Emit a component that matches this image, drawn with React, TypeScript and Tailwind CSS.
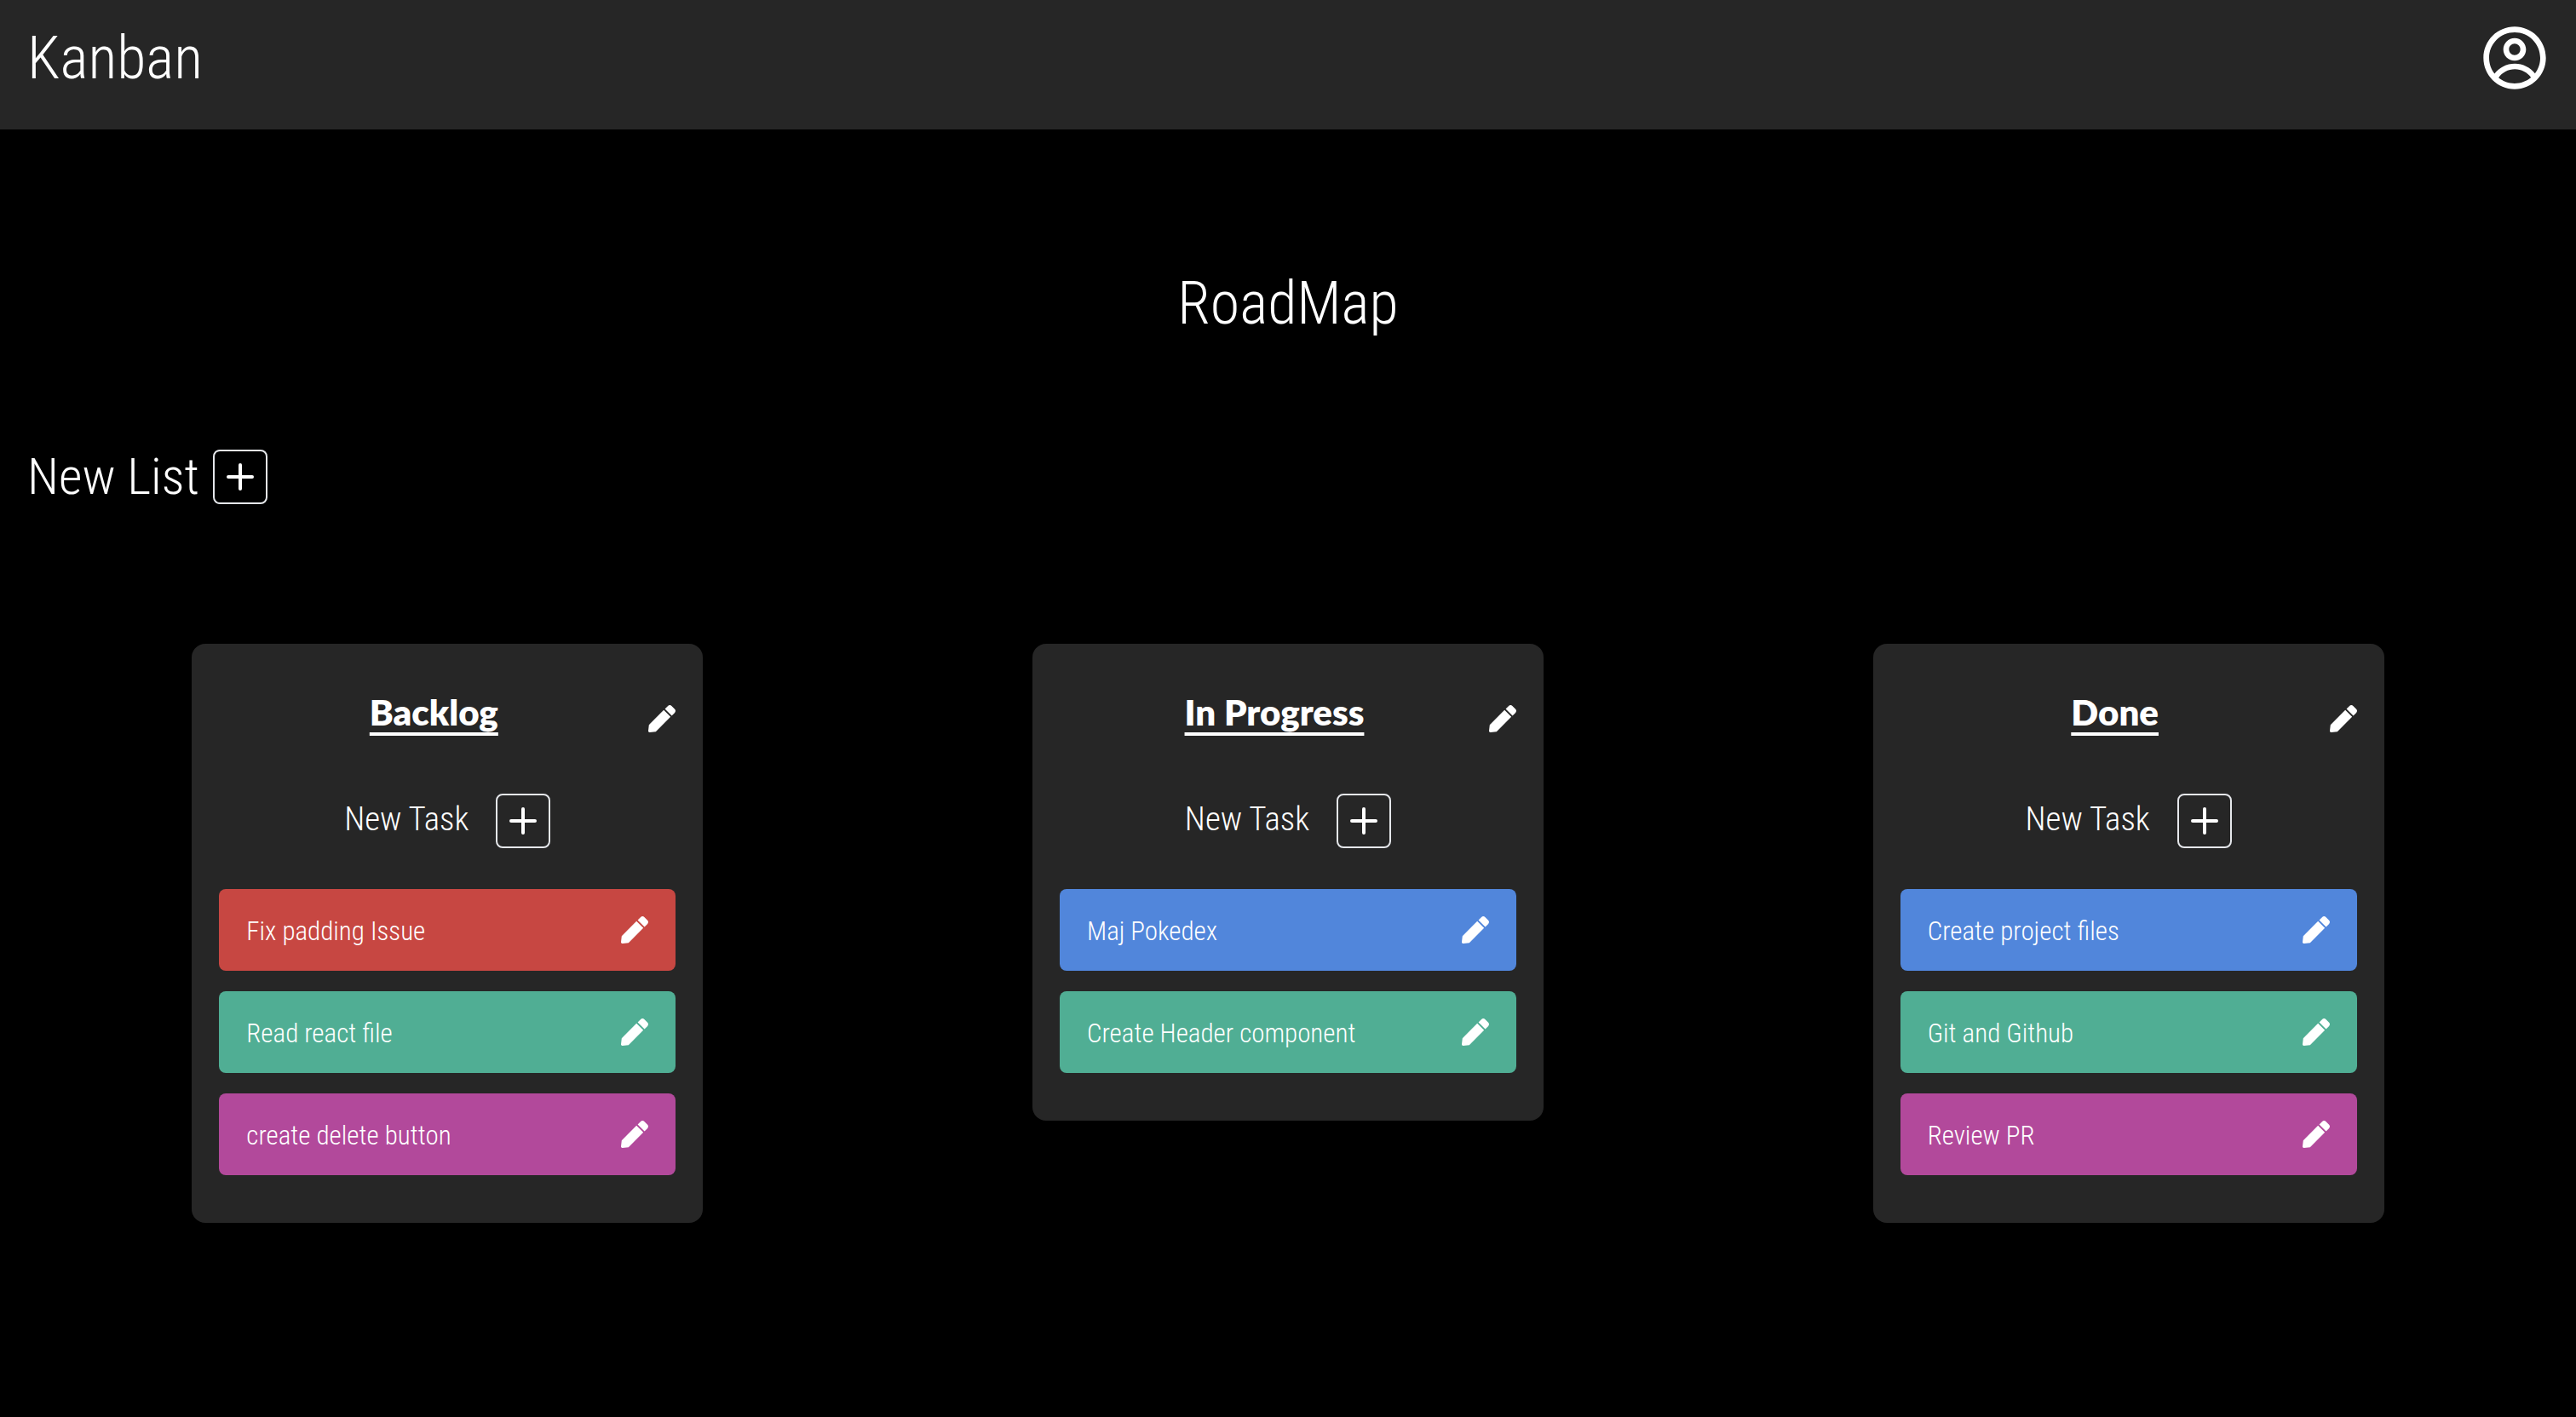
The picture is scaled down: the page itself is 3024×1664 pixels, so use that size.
import { Plus } from "lucide-react";
import { CgProfile } from "react-icons/cg";
import { FaPen } from "react-icons/fa";

type Task = { title: string; color: string };
type List = { title: string; tasks: Task[] };

const RED = "bg-[#c74742]";
const GREEN = "bg-[#50ae94]";
const PURPLE = "bg-[#b2499b]";
const BLUE = "bg-[#5186db]";

const lists: List[] = [
  {
    title: "Backlog",
    tasks: [
      { title: "Fix padding Issue", color: RED },
      { title: "Read react file", color: GREEN },
      { title: "create delete button", color: PURPLE },
    ],
  },
  {
    title: "In Progress",
    tasks: [
      { title: "Maj Pokedex", color: BLUE },
      { title: "Create Header component", color: GREEN },
    ],
  },
  {
    title: "Done",
    tasks: [
      { title: "Create project files", color: BLUE },
      { title: "Git and Github", color: GREEN },
      { title: "Review PR", color: PURPLE },
    ],
  },
];

function AddButton({ label }: { label: string }) {
  return (
    <button
      type="button"
      aria-label={label}
      className="flex size-16 items-center justify-center rounded-lg border-2 border-gray-200"
    >
      <Plus className="size-12 shrink-0" strokeWidth={2} />
    </button>
  );
}

function EditButton({ label }: { label: string }) {
  return (
    <button type="button" aria-label={label} className="shrink-0">
      <FaPen className="size-8" />
    </button>
  );
}

function ListCard({ list }: { list: List }) {
  return (
    <section className="w-[600px] rounded-2xl bg-neutral-800 px-8 py-14">
      <div className="flex h-16 items-center">
        <h2 className="flex-1 pb-4 text-center font-['Lato',sans-serif] text-[42px] leading-12 font-extrabold underline decoration-4 underline-offset-8">
          {list.title}
        </h2>
        <EditButton label={`Edit ${list.title}`} />
      </div>
      <div className="mt-14 flex items-center justify-center gap-8">
        <p className="pb-1 text-[39px] leading-12">New Task</p>
        <AddButton label={`New task in ${list.title}`} />
      </div>
      <ul className="mt-12 flex flex-col gap-6">
        {list.tasks.map((task) => (
          <li
            key={task.title}
            className={`flex h-24 items-center justify-between rounded-lg px-8 text-[31px] leading-12 ${task.color}`}
          >
            <span className="pt-1">{task.title}</span>
            <EditButton label={`Edit ${task.title}`} />
          </li>
        ))}
      </ul>
    </section>
  );
}

export default function App() {
  return (
    <div className="min-h-screen bg-black font-['Roboto_Condensed','Roboto',sans-serif] font-[350] text-white">
      <header className="flex items-center justify-between bg-neutral-800 px-8 pt-7 pb-11">
        <p className="text-[70px] leading-20">Kanban</p>
        <button type="button" aria-label="Profile">
          <CgProfile className="size-20" />
        </button>
      </header>
      <main className="px-8 pt-41">
        <h1 className="text-center text-[70px] leading-20">RoadMap</h1>
        <div className="mt-33 flex items-center gap-4">
          <p className="text-[60px] leading-16">New List</p>
          <AddButton label="New list" />
        </div>
        <div className="mt-41 flex flex-wrap items-start justify-around">
          {lists.map((list) => (
            <ListCard key={list.title} list={list} />
          ))}
        </div>
      </main>
    </div>
  );
}
